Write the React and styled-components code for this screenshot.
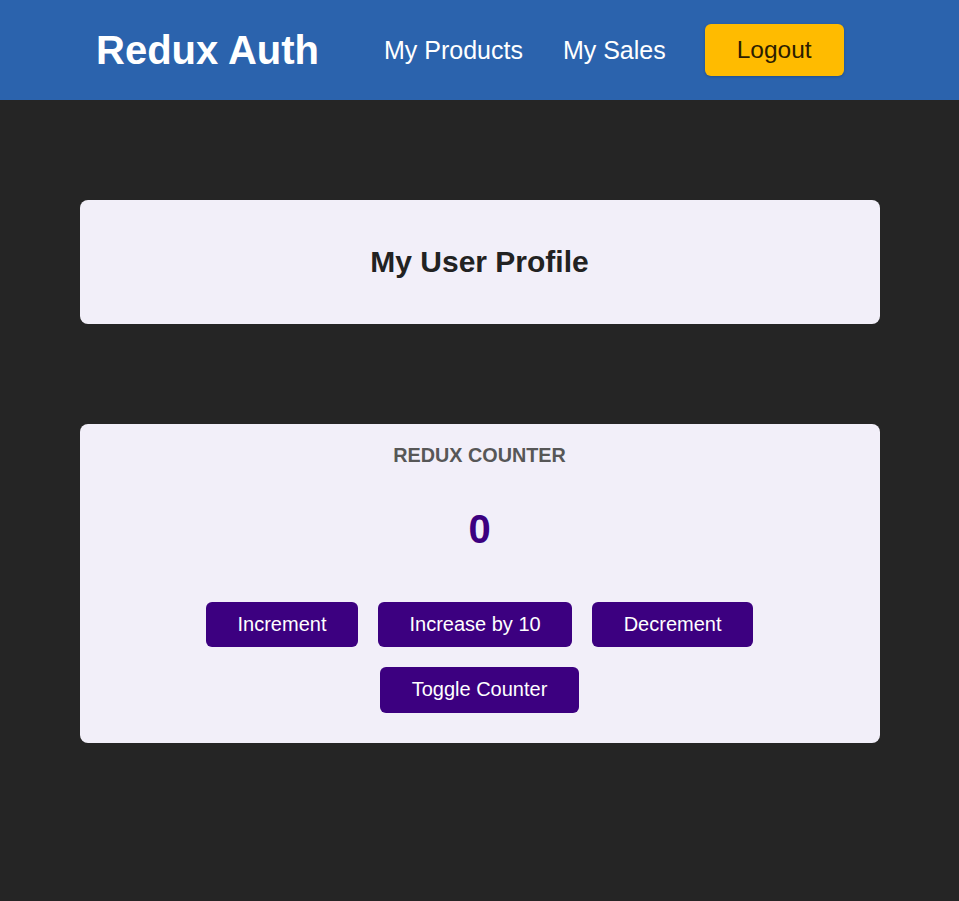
import React from "react";
import styled, { createGlobalStyle } from "styled-components";

const GlobalStyle = createGlobalStyle`
  * { box-sizing: border-box; }
  html, body {
    margin: 0;
    padding: 0;
    background: #252525;
    font-family: "Liberation Sans", Arial, sans-serif;
  }
`;

const Header = styled.header`
  height: 100px;
  background: #2b63ad;
  display: flex;
  align-items: center;
  padding: 0 0 0 96px;
`;

const Logo = styled.h1`
  margin: 0 65px 0 0;
  color: #ffffff;
  font-size: 40px;
  font-weight: bold;
  line-height: 46px;
`;

const Nav = styled.nav`
  display: flex;
  align-items: center;
  gap: 40px;
`;

const NavLink = styled.a`
  color: #ffffff;
  font-size: 25px;
  text-decoration: none;
  cursor: pointer;
`;

const LogoutButton = styled.button`
  font-family: inherit;
  font-size: 24.5px;
  color: #2c1d00;
  background: #ffbb00;
  border: none;
  border-radius: 6px;
  height: 52px;
  padding: 0 32px;
  margin-left: -1px;
  box-shadow: 0 1px 3px rgba(0, 0, 0, 0.2);
  cursor: pointer;
`;

const Main = styled.main`
  display: flex;
  flex-direction: column;
  align-items: center;
  gap: 100px;
  padding: 100px 0;
`;

const Card = styled.section`
  width: 800px;
  background: #f2eff9;
  border-radius: 8px;
  text-align: center;
`;

const ProfileCard = styled(Card)`
  height: 124px;
  display: flex;
  align-items: center;
  justify-content: center;
`;

const ProfileTitle = styled.h2`
  margin: 0;
  color: #222222;
  font-size: 30px;
  font-weight: bold;
  line-height: 34px;
`;

const CounterCard = styled(Card)`
  padding: 20px 16px 30px;
`;

const CounterTitle = styled.h1`
  margin: 0;
  text-transform: uppercase;
  color: #575757;
  font-size: 19.8px;
  line-height: 22px;
`;

const Value = styled.div`
  margin: 40px 0 50px;
  color: #3c0080;
  font-size: 40px;
  font-weight: bold;
  line-height: 46px;
`;

const ButtonRow = styled.div`
  display: flex;
  justify-content: center;
  gap: 20px;
  & + & {
    margin-top: 20px;
  }
`;

const CounterButton = styled.button`
  font-family: inherit;
  font-size: 20px;
  line-height: 23px;
  color: #ffffff;
  background: #3c0080;
  border: none;
  border-radius: 6px;
  padding: ${(p) => (p.$tall ? "11px 31.5px 12px" : "11px 31.5px")};
  cursor: pointer;
`;

export default function App() {
  return (
    <>
      <GlobalStyle />
      <Header>
        <Logo>Redux Auth</Logo>
        <Nav>
          <NavLink>My Products</NavLink>
          <NavLink>My Sales</NavLink>
          <LogoutButton>Logout</LogoutButton>
        </Nav>
      </Header>
      <Main>
        <ProfileCard>
          <ProfileTitle>My User Profile</ProfileTitle>
        </ProfileCard>
        <CounterCard>
          <CounterTitle>Redux Counter</CounterTitle>
          <Value>0</Value>
          <ButtonRow>
            <CounterButton>Increment</CounterButton>
            <CounterButton>Increase by 10</CounterButton>
            <CounterButton>Decrement</CounterButton>
          </ButtonRow>
          <ButtonRow>
            <CounterButton $tall>Toggle Counter</CounterButton>
          </ButtonRow>
        </CounterCard>
      </Main>
    </>
  );
}
